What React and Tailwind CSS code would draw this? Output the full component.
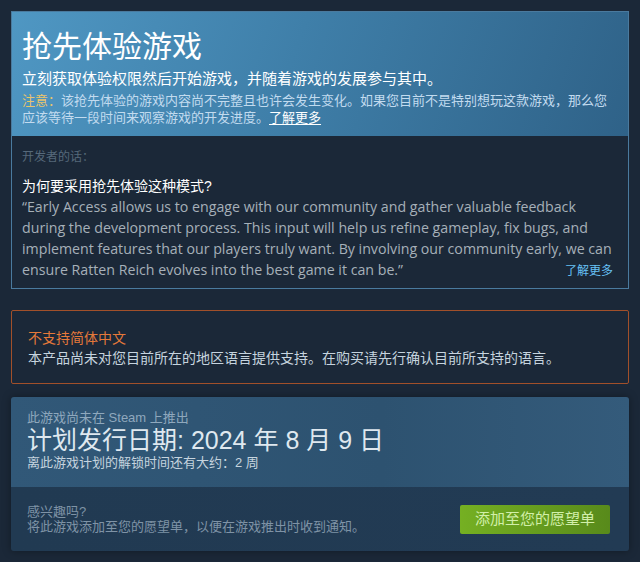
// Steam early-access notice block (zh-CN)
const cjk = 'font-["Arial","Liberation_Sans","Noto_Sans_CJK_SC",sans-serif]';

export default function App() {
  return (
    <div className={`min-h-[562px] bg-[#1b2838] px-[11px] pt-[11px] pb-[11px] ${cjk}`}>
      {/* Early access panel */}
      <div className="border border-[#4a7a9e] bg-[#1b2838]">
        <div className="bg-[linear-gradient(110deg,#4f97c3_0%,#3f7fa9_45%,#2f6288_100%)] px-[10px] pt-[16px] pb-[10px]">
          <h1 className="text-[30px] leading-[38px] text-white">抢先体验游戏</h1>
          <p className="mt-[3px] text-[15px] leading-[20px] text-white">
            立刻获取体验权限然后开始游戏，并随着游戏的发展参与其中。
          </p>
          <p className="mt-[3px] text-[13px] leading-[17px] text-[#c2dbef]">
            <span className="text-[#e9c46c]">注意：</span>
            该抢先体验的游戏内容尚不完整且也许会发生变化。如果您目前不是特别想玩这款游戏，那么您应该等待一段时间来观察游戏的开发进度。
            <span className="text-white underline underline-offset-2">了解更多</span>
          </p>
        </div>
        <div className="pl-[10px] pr-[6px] pt-[13px] pb-[9px]">
          <p className="text-[12px] leading-[16px] text-[#56697a]">开发者的话：</p>
          <p className="mt-[11px] text-[14px] leading-[20px] text-white">为何要采用抢先体验这种模式?</p>
          <p className="text-[14.2px] leading-[21px] text-[#a6b0b9] font-['Open_Sans',sans-serif]">
            “Early Access allows us to engage with our community and gather valuable feedback during the
            development process. This input will help us refine gameplay, fix bugs, and implement features that
            our players truly want. By involving our community early, we can ensure Ratten Reich evolves into the
            best game it can be.”
          </p>
          <div className="-mt-[17px] flex justify-end pr-[9px]">
            <span className="text-[12px] leading-[16px] text-[#67c1f5]">了解更多</span>
          </div>
        </div>
      </div>

      {/* Language warning */}
      <div className="mt-[21px] rounded-[2px] border border-[#a2502a] px-[16px] pt-[17px] pb-[15px]">
        <p className="text-[14px] leading-[20px] text-[#e5793a]">不支持简体中文</p>
        <p className="text-[14px] leading-[20px] text-[#c6d4df]">
          本产品尚未对您目前所在的地区语言提供支持。在购买请先行确认目前所支持的语言。
        </p>
      </div>

      {/* Coming soon / wishlist */}
      <div className="mt-[13px] overflow-hidden rounded-[3px] shadow-[0_0_8px_rgba(0,0,0,0.35)]">
        <div className="bg-[linear-gradient(90deg,#315878_0%,#2d5270_60%,#345b7b_100%)] px-[16px] pt-[12px] pb-[16px]">
          <p className="text-[13px] leading-[17px] text-[#8fa8bd]">此游戏尚未在 Steam 上推出</p>
          <p className="text-[25px] leading-[28px] text-[#dfe8ef]">计划发行日期: 2024 年 8 月 9 日</p>
          <p className="text-[13px] leading-[17px] text-[#c6d4df]">离此游戏计划的解锁时间还有大约：2 周</p>
        </div>
        <div className="flex items-center justify-between bg-[linear-gradient(90deg,#213a52_0%,#223b54_100%)] pl-[16px] pr-[19px] pt-[17px] pb-[17px]">
          <div className="text-[13px] leading-[15px] text-[#7f93a6]">
            <p>感兴趣吗?</p>
            <p>将此游戏添加至您的愿望单，以便在游戏推出时收到通知。</p>
          </div>
          <button className="h-[29px] rounded-[2px] bg-[linear-gradient(90deg,#75b022_0%,#588a1b_100%)] px-[15px] text-[15px] text-[#d2efa9]">
            添加至您的愿望单
          </button>
        </div>
      </div>
    </div>
  );
}
